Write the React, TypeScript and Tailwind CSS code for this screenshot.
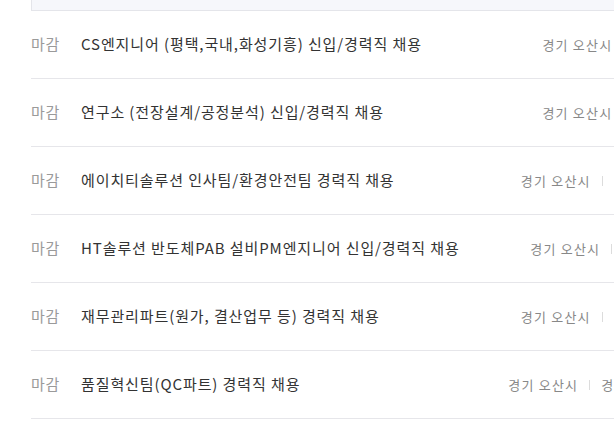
import React from 'react';

const jobs = [
  { title: 'CS엔지니어 (평택,국내,화성기흥) 신입/경력직 채용', place: '경기 오산시', career: '경력무관' },
  { title: '연구소 (전장설계/공정분석) 신입/경력직 채용', place: '경기 오산시', career: '경력무관' },
  { title: '에이치티솔루션 인사팀/환경안전팀 경력직 채용', place: '경기 오산시', career: '경력3년이상' },
  { title: 'HT솔루션 반도체PAB 설비PM엔지니어 신입/경력직 채용', place: '경기 오산시', career: '경력1~3년' },
  { title: '재무관리파트(원가, 결산업무 등) 경력직 채용', place: '경기 오산시', career: '경력2년이상' },
  { title: '품질혁신팀(QC파트) 경력직 채용', place: '경기 오산시', career: '경력 10년이상' },
];

export default function App() {
  return (
    <div className="w-full h-[442px] overflow-hidden bg-white font-['Noto_Sans_CJK_KR',sans-serif]">
      <div className="ml-[31px] w-[680px]">
        {/* tail of the list header */}
        <div className="h-[11px] bg-[#f6f7fb] border-l border-b border-[#e4e5ea]" />

        <ul>
          {jobs.map((job, i) => (
            <li key={i} className="h-[68px] flex items-center border-b border-[#e6e6ea]">
              <span className="w-[50px] shrink-0 text-[15px] tracking-[0.8px] text-[#9a9a9a]">마감</span>
              <span className="flex-1 text-[15px] tracking-[0.9px] text-[#333] whitespace-nowrap">{job.title}</span>
              <div className="flex items-center pr-[23px] text-[13px] tracking-[1.2px] text-[#888] whitespace-nowrap">
                <span>{job.place}</span>
                <span className="w-px h-[10px] bg-[#dcdcdc] mx-[11px]" />
                <span>{job.career}</span>
              </div>
            </li>
          ))}
        </ul>
      </div>
    </div>
  );
}
